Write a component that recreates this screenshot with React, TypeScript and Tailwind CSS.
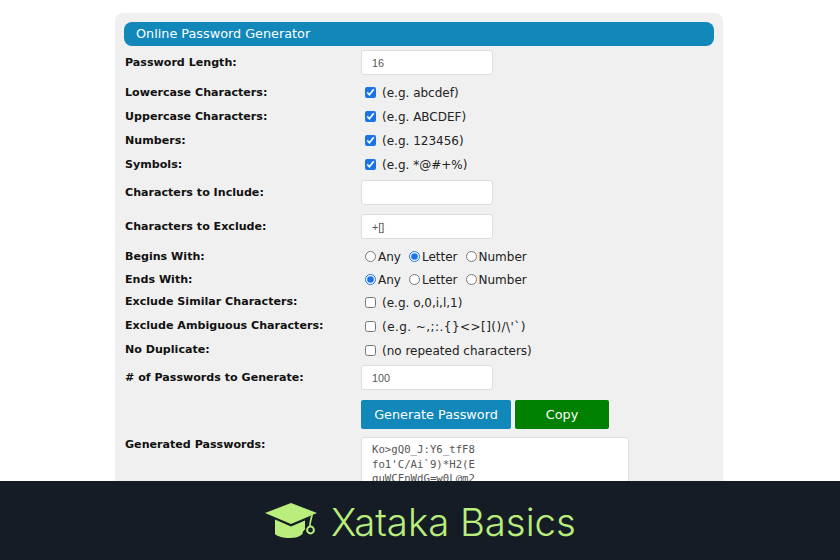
import React from 'react'

const labelFont = "font-['DejaVu_Sans',sans-serif]"

function Label({ children, className = 'pt-[1px]' }: { children: React.ReactNode; className?: string }) {
  return <div className={`w-[236px] shrink-0 text-[11.1px] font-bold text-[#111] ${labelFont} ${className}`}>{children}</div>
}

function TextBox({ value }: { value: string }) {
  return (
    <input
      readOnly
      defaultValue={value}
      className="w-[132px] h-[25px] rounded-[3px] border border-[#ddd] bg-white px-[10px] text-[10.8px] text-[#555] font-['Liberation_Sans',sans-serif] outline-none"
    />
  )
}

function CheckRow({ label, hint, checked, className, labelClass, hintClass = '' }: { label: string; hint: string; checked?: boolean; className: string; labelClass?: string; hintClass?: string }) {
  return (
    <div className={`flex items-center h-[24px] ${className}`}>
      <Label className={labelClass}>{label}</Label>
      <input readOnly type="checkbox" checked={!!checked} className="ml-[4px] mb-[2px] w-[11px] h-[11px] accent-[#1a73e8]" />
      <span className={`ml-[6px] text-[12px] text-[#222] ${labelFont} ${hintClass}`}>{hint}</span>
    </div>
  )
}

function RadioRow({ label, name, picked, className }: { label: string; name: string; picked: string; className: string }) {
  return (
    <div className={`flex items-center h-[23px] ${className}`}>
      <Label>{label}</Label>
      <div className={`flex items-center text-[12px] text-[#222] ${labelFont}`}>
        {['Any', 'Letter', 'Number'].map((opt) => (
          <label key={opt} className="flex items-center ml-[4px] mr-[4px]">
            <input readOnly type="radio" name={name} checked={picked === opt} className="w-[11px] h-[11px] mr-[2px] accent-[#1a73e8]" />
            {opt}
          </label>
        ))}
      </div>
    </div>
  )
}

function CapLogo() {
  return (
    <svg width="54" height="38" viewBox="0 0 54 38" className="shrink-0" fill="#b9ee7c">
      <path d="M27 1 L53 11 L27 22 L1 11 Z" />
      <path d="M11 17.5 L27 24.5 L41 18.5 V27.5 C39.5 28.5 38.5 30 38.5 32 C35 35 31 36 26 36 C19 36 13.5 34.5 11 32 Z" />
      <path d="M47 13.5 L49 12.5 L47 21 L46.5 24 H45 L45.5 20 Z" />
      <circle cx="46.5" cy="28" r="3.4" fill="none" stroke="#b9ee7c" strokeWidth="2" />
    </svg>
  )
}

export default function App() {
  return (
    <div className="h-[560px] w-[840px] flex flex-col overflow-hidden bg-white">
      <main className="flex-1 min-h-0 overflow-hidden pt-[13px] px-[115px] pr-[117px]">
        <div className="h-[600px] rounded-t-[8px] bg-[#f0f0f0] px-[9px] pt-[9px]">
          <div className={`h-[24px] rounded-[8px] bg-[#1287ba] pl-[12px] flex items-center text-[12.8px] text-white ${labelFont}`}>
            Online Password Generator
          </div>

          <div className="pl-[1px]">
            <div className="flex items-center mt-[4px]">
              <Label className="pt-[2px]">Password Length:</Label>
              <TextBox value="16" />
            </div>

            <CheckRow className="mt-[6px]" label="Lowercase Characters:" hint="(e.g. abcdef)" checked />
            <CheckRow className="" label="Uppercase Characters:" hint="(e.g. ABCDEF)" checked />
            <CheckRow className="" label="Numbers:" hint="(e.g. 123456)" checked />
            <CheckRow className="" label="Symbols:" hint="(e.g. *@#+%)" checked />

            <div className="flex items-center mt-[3px]">
              <Label>Characters to Include:</Label>
              <TextBox value="" />
            </div>
            <div className="flex items-center mt-[9px]">
              <Label className="pt-[2px]">Characters to Exclude:</Label>
              <TextBox value="+[]" />
            </div>

            <RadioRow className="mt-[6px]" label="Begins With:" name="begins" picked="Letter" />
            <RadioRow className="" label="Ends With:" name="ends" picked="Any" />

            <CheckRow className="" labelClass="pb-[1px]" label="Exclude Similar Characters:" hint="(e.g. o,0,i,l,1)" />
            <CheckRow className="" labelClass="pb-[1px]" label="Exclude Ambiguous Characters:" hint={"(e.g. ~,;:.{}<>[]()/\\'`)"} hintClass="tracking-[0.45px]" />
            <CheckRow className="" labelClass="pb-[1px]" label="No Duplicate:" hint="(no repeated characters)" />

            <div className="flex items-center mt-[2px]">
              <Label>{'# of Passwords to Generate:'}</Label>
              <TextBox value="100" />
            </div>

            <div className={`flex mt-[10px] ml-[236px] gap-[4px] text-[12.8px] text-white ${labelFont}`}>
              <button className="w-[150px] h-[29px] rounded-[2px] bg-[#1287ba]">Generate Password</button>
              <button className="w-[94px] h-[29px] rounded-[2px] bg-[#008000]">Copy</button>
            </div>

            <div className="flex items-start mt-[8px]">
              <div className="-mt-[1px]"><Label>Generated Passwords:</Label></div>
              <textarea
                readOnly
                defaultValue={"Ko>gQ0_J:Y6_tfF8\nfo1'C/Ai`9)*H2(E\nguWCFnWdG=w0L@m2\nT3v%xR8s!pZk^Y1b"}
                className="w-[268px] h-[100px] resize-none overflow-hidden rounded-[3px] border border-[#ddd] bg-white px-[10px] py-[5px] text-[10.7px] leading-[14.5px] text-[#555] font-['DejaVu_Sans_Mono',monospace] outline-none"
              />
            </div>
          </div>
        </div>
      </main>

      <footer className="h-[79px] shrink-0 bg-[#151c26] flex items-center pl-[264px] gap-[13px]">
        <CapLogo />
        <span className="pt-[3px] text-[38.3px] font-light leading-none text-[#b9ee7c] font-['Inter',sans-serif]">Xataka Basics</span>
      </footer>
    </div>
  )
}
